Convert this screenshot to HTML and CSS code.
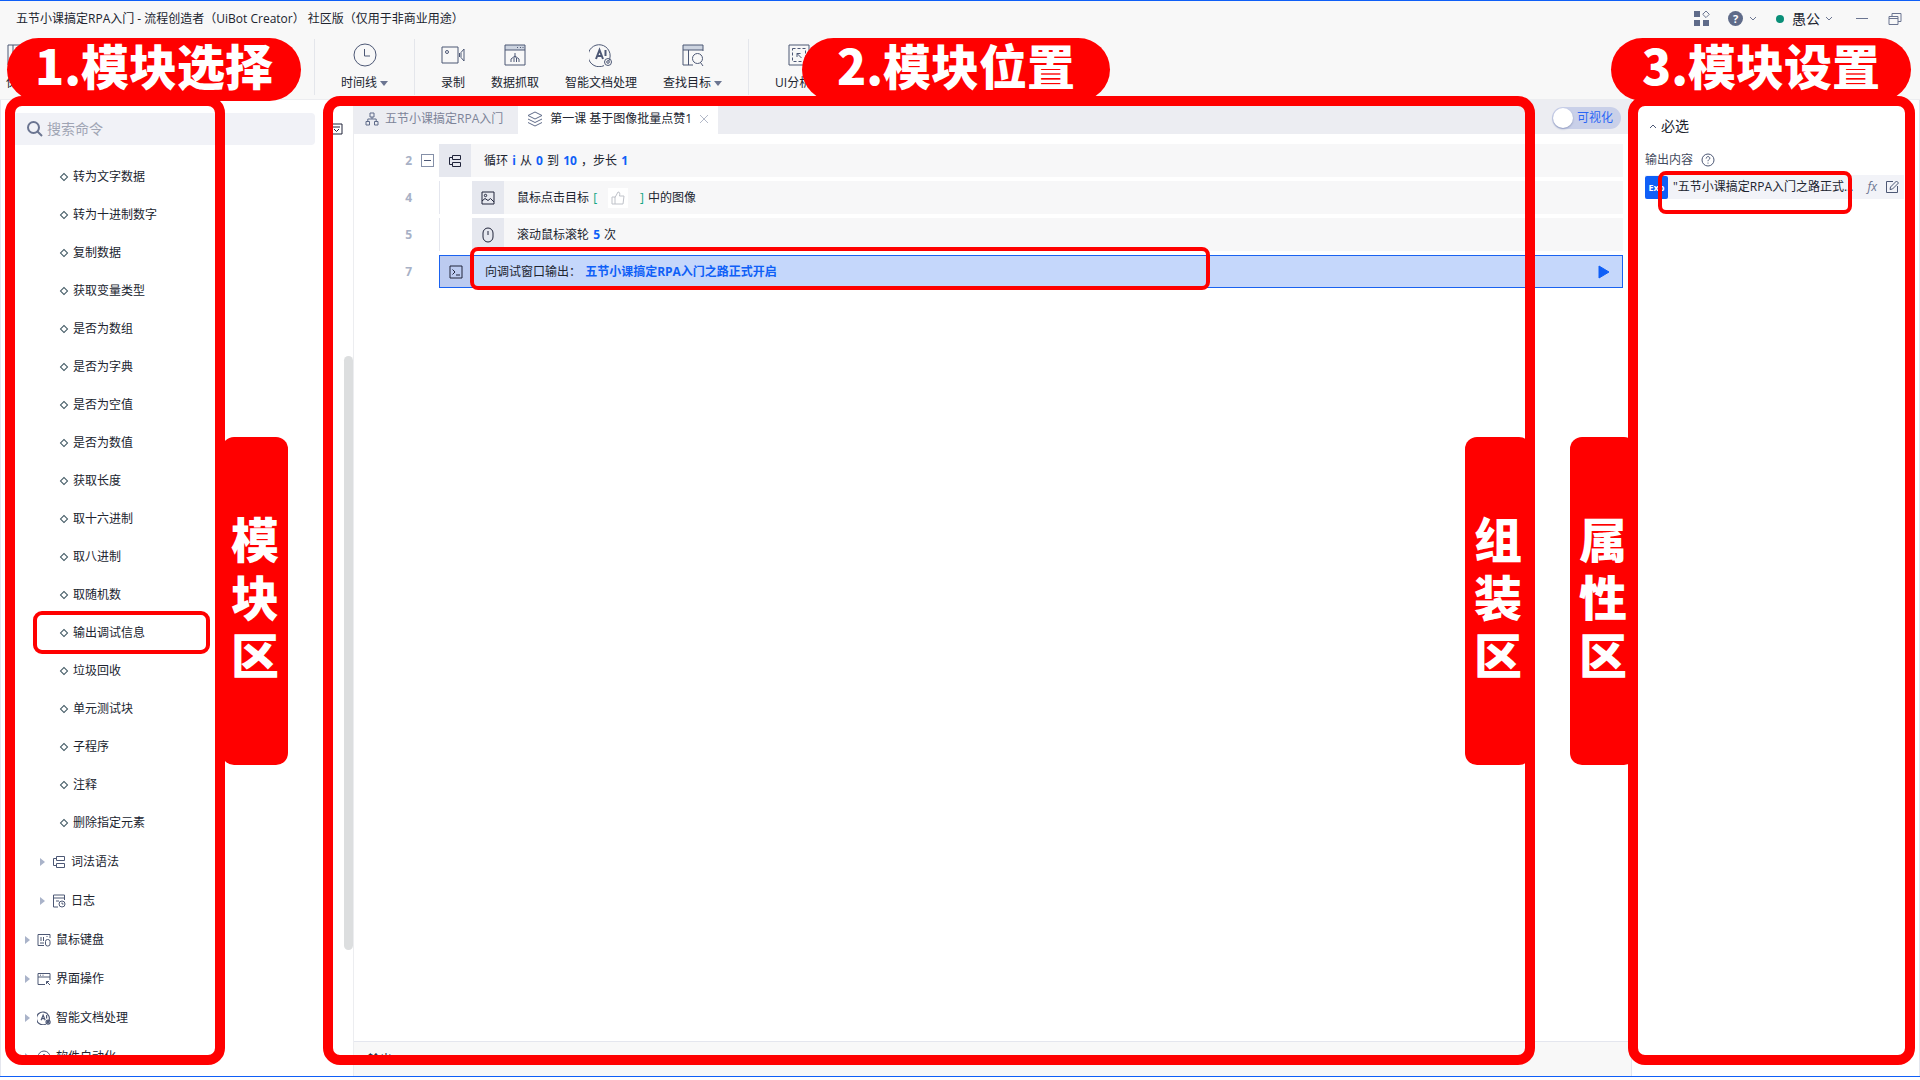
FILE: index.html
```html
<!DOCTYPE html>
<html lang="zh-CN">
<head>
<meta charset="UTF-8">
<meta name="viewport" content="width=device-width, initial-scale=1.0">
<title>五节小课搞定RPA入门 - 流程创造者（UiBot Creator）</title>
<link rel="stylesheet" href="styles.css">
</head>
<body>
<!-- 共用图标 -->
<svg class="defs" width="0" height="0">
  <symbol id="i-flow" viewBox="0 0 14 14"><path d="M4.5 1.5h8v4h-8zM4.5 8.500h8v4h-8zM4.500 3.500h-3v7h3"/></symbol>
  <symbol id="i-ai" viewBox="0 0 24 24"><path d="M19.800 18A11 11 0 1 0 15 22.600"/><path class="bold" d="M7 16l3.500-9 3.500 9M8.200 13h4.600M16.500 7v6"/><circle cx="19" cy="19" r="3.500"/><circle cx="19" cy="19" r="1.300"/></symbol>
  <symbol id="i-down" viewBox="0 0 8 5"><path d="M1 1l3 3 3-3"/></symbol>
</svg>

<header class="titlebar">
  <span class="title">五节小课搞定RPA入门 - 流程创造者（UiBot Creator） 社区版（仅用于非商业用途）</span>
  <div class="window-tools">
    <button class="plain" aria-label="应用"><svg class="apps" width="16" height="16" viewBox="0 0 16 16"><path class="fill" d="M0 0h6v6H0zM0 9h6v6H0zM9 9h6v6H9z"/><path d="M12 0l3.300 3.300L12 6.600 8.700 3.300z"/></svg></button>
    <button class="plain help" aria-label="帮助"><span class="help-dot">?</span><svg width="8" height="5"><use href="#i-down"/></svg></button>
    <button class="plain user"><i class="online"></i>愚公<svg width="8" height="5"><use href="#i-down"/></svg></button>
    <button class="plain" aria-label="最小化"><svg width="12" height="14" viewBox="0 0 12 14"><path d="M0 6.500h12"/></svg></button>
    <button class="plain restore" aria-label="还原"><svg width="14" height="14" viewBox="0 0 14 14"><path d="M1 4.500h9v8H1zM4 4.500v-3h9v8h-3M1 6.500h9"/></svg></button>
  </div>
</header>

<nav class="toolbar">
  <div class="group group-file">
    <button class="tool"><svg width="22" height="24" viewBox="0 0 22 24"><path d="M1 2h20v20H1zM6 2v7h10V2M10 4v3"/></svg><span>保存</span></button>
  </div>
  <div class="group">
    <button class="tool"><svg width="24" height="24" viewBox="0 0 24 24"><circle cx="12" cy="12" r="11"/><path d="M11.500 6v7H17"/></svg><span>时间线<i class="caret"></i></span></button>
  </div>
  <div class="group">
    <button class="tool"><svg width="24" height="24" viewBox="0 0 24 24"><path d="M1 4h16v16H1z"/><circle cx="6" cy="9" r="1.500"/><path d="M18.500 10v4M20 9.500L23 6v12l-3-3.500z"/></svg><span>录制</span></button>
    <button class="tool"><svg width="24" height="24" viewBox="0 0 24 24"><path class="tint" d="M2 2h20v5H2z"/><path d="M2 2h20v20H2zM2 7h20M12 10v5M8 19v-3l4-3 4 3v3M11 15v4M13.500 15v4M14 4.500h1M17 4.500h1M19.500 4.500h1"/></svg><span>数据抓取</span></button>
    <button class="tool"><svg width="24" height="24"><use href="#i-ai"/></svg><span>智能文档处理</span></button>
    <button class="tool"><svg width="24" height="24" viewBox="0 0 24 24"><path class="tint" d="M2 2h20v5H2z"/><path d="M12 22H2V2h20v6M2 7h20M7.500 7v15M19.500 19.500L22 23"/><circle cx="16.500" cy="15.500" r="5"/></svg><span>查找目标<i class="caret"></i></span></button>
  </div>
  <div class="group">
    <button class="tool"><svg width="24" height="24" viewBox="0 0 24 24"><path d="M2 2h20v20H2z"/><path class="dash" d="M5.500 5.500h13v13h-13z"/><path d="M14.500 15L10 10.500M10 14v-3.500h3.500"/></svg><span>UI分析器</span></button>
  </div>
</nav>

<main class="workspace">
  <aside class="commands">
    <div class="search-row">
      <label class="search"><svg width="16" height="16" viewBox="0 0 16 16"><circle cx="6.500" cy="6.500" r="5.500"/><path d="M10.500 10.500l4.500 4.500"/></svg><input type="text" placeholder="搜索命令" aria-label="搜索命令"></label>
      <button class="plain fold" aria-label="折叠"><svg width="14" height="12" viewBox="0 0 14 12"><path d="M1 1h12v10H1zM4 4h7M5 6l2.500 2.500L10 6"/></svg></button>
    </div>
    <ul class="tree">
      <li class="leaf">转为文字数据</li>
      <li class="leaf">转为十进制数字</li>
      <li class="leaf">复制数据</li>
      <li class="leaf">获取变量类型</li>
      <li class="leaf">是否为数组</li>
      <li class="leaf">是否为字典</li>
      <li class="leaf">是否为空值</li>
      <li class="leaf">是否为数值</li>
      <li class="leaf">获取长度</li>
      <li class="leaf">取十六进制</li>
      <li class="leaf">取八进制</li>
      <li class="leaf">取随机数</li>
      <li class="leaf picked">输出调试信息</li>
      <li class="leaf">垃圾回收</li>
      <li class="leaf">单元测试块</li>
      <li class="leaf">子程序</li>
      <li class="leaf">注释</li>
      <li class="leaf">删除指定元素</li>
      <li class="branch sub"><svg width="14" height="14"><use href="#i-flow"/></svg>词法语法</li>
      <li class="branch sub"><svg width="14" height="14" viewBox="0 0 14 14"><path d="M6 13H1.500V1h11v5M1.500 4h11M4 7h3"/><circle cx="10" cy="10" r="3"/><path d="M10 8.500V10h1.500"/></svg>日志</li>
      <li class="branch"><svg width="14" height="14" viewBox="0 0 14 14"><path d="M7 12.500H1v-11h12V5M4 4v4M6.500 4v4M3 10h4M9.500 3.500h1"/><rect x="8.500" y="6.500" width="4.500" height="6.500" rx="2"/></svg>鼠标键盘</li>
      <li class="branch"><svg width="14" height="14" viewBox="0 0 14 14"><path d="M8 12.500H1v-11h12V8M1 5h12M3 3.200h1M5.500 3.200h1M13 13L9.500 9.500M9.500 12V9.500H12"/></svg>界面操作</li>
      <li class="branch"><svg class="ai-small" width="14" height="14"><use href="#i-ai"/></svg>智能文档处理</li>
      <li class="branch"><svg width="14" height="14" viewBox="0 0 14 14"><circle cx="7" cy="7" r="6"/><path d="M5 9l2-5 2 5"/></svg>软件自动化</li>
    </ul>
    <div class="scroll-thumb"></div>
    <div class="frame frame-commands"></div>
    <div class="side-label side-commands">模块区</div>
  </aside>

  <section class="editor">
    <div class="tabs">
      <button class="tab"><svg width="14" height="14" viewBox="0 0 14 14"><path d="M5 1h4v4H5zM1 9.500h3.500V13H1zM9.500 9.500H13V13H9.500zM7 5v2M2.800 9.500V7h8.400v2.500"/></svg>五节小课搞定RPA入门</button>
      <button class="tab active"><svg width="16" height="16" viewBox="0 0 16 16"><path d="M8 1l7 3.500L8 8 1 4.500zM1 8l7 3.500L15 8M1 11.500L8 15l7-3.500"/></svg>第一课 基于图像批量点赞1<svg class="close" width="10" height="10" viewBox="0 0 10 10"><path d="M1 1l8 8M9 1L1 9"/></svg></button>
      <label class="switch"><input type="checkbox"><span>可视化</span></label>
    </div>

    <ol class="steps">
      <li class="step">
        <span class="line-no">2</span><button class="plain minus" aria-label="折叠循环"></button>
        <div class="block"><span class="kind"><svg width="14" height="14"><use href="#i-flow"/></svg></span><p>循环 <b>i</b> 从 <b>0</b> 到 <b>10</b> ，步长 <b>1</b></p></div>
      </li>
      <li class="step nested">
        <span class="line-no">4</span>
        <div class="block"><span class="kind"><svg width="14" height="14" viewBox="0 0 14 14"><path d="M1 1h12v12H1zM1 10l3-2.500 3 2 2.500-2L13 11"/><circle cx="4.500" cy="4.500" r="1.200"/></svg></span><p>鼠标点击目标 <em>[</em><span class="thumb"><svg width="16" height="16" viewBox="0 0 16 16"><path d="M2 7h3v7H2zM5 7.500L8 2c2 0 2 1.500 1.500 4H14l-1 8H5"/></svg></span><em>]</em> 中的图像</p></div>
      </li>
      <li class="step nested">
        <span class="line-no">5</span>
        <div class="block"><span class="kind"><svg width="14" height="16" viewBox="0 0 14 16"><rect x="2" y="1" width="10" height="14" rx="5"/><path d="M7 4v4"/></svg></span><p>滚动鼠标滚轮 <b>5</b> 次</p></div>
      </li>
      <li class="step selected">
        <span class="line-no">7</span>
        <div class="block"><span class="kind"><svg width="14" height="14" viewBox="0 0 14 14"><path d="M1 1h12v12H1zM3.500 4.500L6 7 3.500 9.500M7 10h4"/></svg></span><p>向调试窗口输出： <b>五节小课搞定RPA入门之路正式开启</b></p><button class="plain play" aria-label="运行"><svg width="12" height="14" viewBox="0 0 12 14"><path d="M1 1l10 6-10 6z"/></svg></button><i class="frame frame-step"></i></div>
      </li>
    </ol>

    <footer class="output">输出</footer>
    <div class="side-label side-editor">组装区</div>
  </section>

  <aside class="props">
    <h2><svg width="8" height="5" viewBox="0 0 8 5"><path d="M1 4l3-3 3 3"/></svg>必选</h2>
    <label class="field-label" for="content">输出内容<svg width="14" height="14" viewBox="0 0 14 14"><circle cx="7" cy="7" r="6"/><path d="M5.200 5.500C5.200 3 8.800 3 8.800 5.300 8.800 6.500 7 6.500 7 8.200M7 9.600v1"/></svg></label>
    <div class="field">
      <span class="exp">Exp</span>
      <input id="content" type="text" value='"五节小课搞定RPA入门之路正式开启"'>
      <button class="plain fx">fx</button>
      <button class="plain" aria-label="编辑"><svg width="14" height="14" viewBox="0 0 14 14"><path d="M8 1.500H1.500v11h11V6M5 9.500l.5-2.500L11.500 1l2 2-6 6z"/></svg></button>
      <i class="frame frame-field"></i>
    </div>
    <div class="frame frame-props"></div>
    <div class="side-label side-props">属性区</div>
  </aside>

  <div class="frame frame-editor"></div>
  <div class="pill pill-1">1.模块选择</div>
  <div class="pill pill-2">2.模块位置</div>
  <div class="pill pill-3">3.模块设置</div>
</main>
</body>
</html>
```
FILE: styles.css
```css
*, *::before, *::after {
  box-sizing: border-box;
}
body {
  margin: 0;
  height: 100vh;
  display: flex;
  flex-direction: column;
  border-top: 1px solid #0f5ff7;
  padding-bottom: 3px;
  background: #fff;
  color: #20242f;
  font-family: "Open Sans", "Noto Sans CJK SC", sans-serif;
  font-size: 12px;
  line-height: 18px;
  overflow: hidden;
}
svg {
  flex: none;
  fill: none;
  stroke: #4d5875;
  stroke-width: 1;
}
.defs {
  position: absolute;
}
.bold {
  stroke-width: 2;
}
button, input {
  font: inherit;
  color: inherit;
  border: 0;
  padding: 0;
  background: none;
}
button, .plain {
  display: flex;
  align-items: center;
}
ul, ol {
  list-style: none;
  margin: 0;
  padding: 0;
}
p {
  margin: 0;
}

/* 标题栏 */
.titlebar {
  display: flex;
  align-items: center;
  justify-content: space-between;
  height: 35px;
  padding: 0 18px 0 16px;
  background: #f8f8f8;
}
.window-tools {
  display: flex;
  align-items: center;
  gap: 24px;
}
.window-tools svg {
  stroke: #6b7591;
}
.window-tools .fill {
  fill: #5f6b89;
  stroke: none;
}
.help {
  gap: 6px;
  margin-left: -6px;
}
.help-dot {
  width: 15px;
  height: 15px;
  border-radius: 50%;
  background: #5f6b89;
  color: #fff;
  font-size: 11px;
  font-weight: bold;
  line-height: 15px;
  text-align: center;
}
.user {
  gap: 5px;
  margin-left: -5px;
  font-size: 14px;
}
.online {
  width: 8px;
  height: 8px;
  margin-right: 3px;
  border-radius: 50%;
  background: #0a8f78;
}
.user + .plain {
  margin-left: -1px;
}
.restore {
  margin-left: -4px;
}

/* 工具栏 */
.toolbar {
  display: flex;
  height: 64px;
  padding-top: 3px;
  background: #f8f8f8;
  border-bottom: 1px solid #ecedf0;
}
.group {
  display: flex;
  gap: 26px;
  height: 56px;
  padding: 0 26px;
  border-right: 1px solid #e4e6eb;
}
.group:last-child {
  border-right: 0;
}
.group-file {
  width: 315px;
  padding: 0 6px;
}
.tool {
  flex-direction: column;
  align-items: center;
  justify-content: flex-start;
  padding-top: 4px;
  gap: 7px;
  white-space: nowrap;
}
.tint {
  fill: #cdd4e0;
  stroke: none;
}
.dash {
  stroke-dasharray: 3 2;
}
.caret {
  display: inline-block;
  margin-left: 3px;
  border: 4px solid transparent;
  border-top: 5px solid #6b7591;
  border-bottom: 0;
  vertical-align: 1px;
}

/* 主体 */
.workspace {
  position: relative;
  flex: 1;
  min-height: 0;
  display: flex;
  border-bottom: 1px solid #0f5ff7;
}
.commands {
  position: relative;
  width: 354px;
  display: flex;
  flex-direction: column;
  border-left: 1px solid #e4e6ee;
  border-right: 1px solid #ecedf0;
}
.search-row {
  display: flex;
  align-items: center;
  gap: 14px;
  padding: 13px 0 0 11px;
}
.search {
  display: flex;
  align-items: center;
  gap: 4px;
  width: 303px;
  height: 32px;
  padding-left: 15px;
  border-radius: 4px;
  background: #f1f2f7;
}
.search svg {
  stroke: #6b7591;
  stroke-width: 2;
}
.fold svg {
  stroke: #20243a;
}
.search input {
  flex: 1;
  min-width: 0;
  font-size: 14px;
}
.search input::placeholder {
  color: #a0a5b4;
}
.tree {
  flex: 1;
  min-height: 0;
  margin: 13px 0 13px;
  overflow: hidden;
}
.tree li {
  display: flex;
  align-items: center;
}
.leaf {
  height: 38px;
  padding-left: 60px;
}
.leaf::before {
  content: "";
  width: 6px;
  height: 6px;
  margin-right: 6px;
  border: 1px solid #3d5560;
  transform: rotate(45deg);
}
.branch {
  height: 39px;
  gap: 5px;
  padding-left: 24px;
}
.branch::before {
  content: "";
  margin-right: 2px;
  border: 4px solid transparent;
  border-left: 5px solid #a9b3c9;
  border-right: 0;
}
.sub {
  padding-left: 39px;
}
.ai-small {
  stroke-width: 2;
}
.scroll-thumb {
  position: absolute;
  right: 0;
  top: 256px;
  bottom: 126px;
  width: 9px;
  border-radius: 5px;
  background: #dcdedf;
}

/* 编辑区 */
.editor {
  position: relative;
  flex: 1;
  min-width: 0;
  display: flex;
  flex-direction: column;
  border-right: 1px solid #e4e6ee;
}
.tabs {
  display: flex;
  height: 34px;
  padding-right: 10px;
  background: #ecedf2;
}
.tab {
  gap: 6px;
  padding: 3px 15px 0 11px;
  color: #7c8499;
}
.tab svg {
  stroke: #5f6b89;
}
.tab.active {
  gap: 7px;
  padding: 3px 9px 0;
  background: #fff;
  color: #20242f;
}
.tab .close {
  stroke: #b3b9c8;
}
.switch {
  display: flex;
  align-items: center;
  align-self: center;
  gap: 4px;
  height: 22px;
  margin: 2px 0 0 auto;
  padding-right: 8px;
  border-radius: 11px;
  background: #c9d0e9;
  color: #2a66f5;
}
.switch input {
  appearance: none;
  width: 20px;
  height: 20px;
  margin: 0 0 0 1px;
  border-radius: 50%;
  background: #fff;
  box-shadow: 0 1px 2px #8d98bd;
}
.steps {
  flex: 1;
  display: flex;
  flex-direction: column;
  gap: 4px;
  padding: 10px 8px 0 0;
}
.step {
  display: flex;
  align-items: center;
  height: 33px;
}
.line-no {
  width: 58px;
  color: #a8b1c6;
  font-weight: bold;
  text-align: right;
}
.minus {
  justify-content: center;
  width: 13px;
  height: 13px;
  margin-left: 9px;
  border: 1px solid #8590a8;
}
.minus::before {
  content: "";
  width: 7px;
  height: 1px;
  background: #4d5875;
}
.block {
  position: relative;
  flex: 1;
  display: flex;
  align-items: center;
  height: 33px;
  margin-left: 27px;
  background: #f7f7f8;
}
.minus + .block {
  margin-left: 5px;
}
.nested .block {
  border-left: 1px solid #e4e6ee;
}
.nested .block::before {
  content: "";
  align-self: stretch;
  width: 32px;
  background: #fff;
}
.kind {
  display: flex;
  align-items: center;
  justify-content: center;
  width: 32px;
  height: 33px;
  margin-right: 13px;
  background: #e6e8ef;
}
.kind svg {
  stroke: #20243a;
}
.block p {
  display: flex;
  align-items: center;
  white-space: pre;
}
.block b {
  margin: 0 1px;
  color: #0f5ff7;
}
.block em {
  margin: 0 1px;
  color: #12a582;
  font-style: normal;
}
.thumb {
  display: flex;
  justify-content: center;
  align-items: center;
  width: 20px;
  height: 20px;
  margin: 0 11px 0 10px;
  background: #fff;
}
.thumb svg {
  stroke: #bfc2c9;
}
.selected .block {
  border: 1px solid #1a62f0;
  background: #c5d7fb;
}
.selected .kind {
  height: 31px;
  background: #bccbf0;
}
.play {
  margin: 0 12px 0 auto;
}
.play svg {
  fill: #0f5ff7;
  stroke: #0f5ff7;
}
.output {
  height: 35px;
  padding: 9px 14px;
  border-top: 1px solid #e4e6ee;
  background: #f8f8f8;
}

/* 属性面板 */
.props {
  position: relative;
  width: 288px;
  padding: 14px 15px 0 13px;
  border-right: 1px solid #e4e6ee;
}
.props h2 {
  display: flex;
  align-items: center;
  gap: 4px;
  margin: 0 0 16px 4px;
  font-size: 14px;
  font-weight: normal;
  line-height: 24px;
}
.field-label {
  display: flex;
  align-items: center;
  gap: 8px;
  height: 12px;
  margin-bottom: 9px;
  color: #444b60;
}
.field {
  position: relative;
  display: flex;
  align-items: center;
  gap: 5px;
  height: 24px;
  padding-right: 5px;
  background: #f2f3f8;
}
.exp {
  width: 23px;
  border-radius: 2px;
  background: #0f5ff7;
  color: #fff;
  font-size: 9px;
  font-weight: bold;
  line-height: 23px;
  text-align: center;
}
.field input {
  flex: 1;
  min-width: 0;
  text-overflow: ellipsis;
}
.fx {
  margin: 0 3px 0 0;
  color: #6b7591;
  font-style: italic;
}

/* 红色标注 */
.frame {
  position: absolute;
  border: 10px solid #f00;
  border-radius: 17px;
  pointer-events: none;
}
.frame-commands {
  top: -4px;
  bottom: 11px;
  left: 4px;
  right: 128px;
}
.frame-editor {
  top: -4px;
  bottom: 11px;
  left: 323px;
  right: 385px;
}
.frame-props {
  top: -4px;
  bottom: 11px;
  left: -4px;
  right: 4px;
}
.frame-step, .frame-field {
  border-width: 4px;
  border-radius: 8px;
}
.frame-step {
  top: -9px;
  bottom: -3px;
  left: 30px;
  right: 412px;
}
.frame-field {
  top: -4px;
  bottom: -15px;
  left: 13px;
  right: 52px;
}
.picked {
  position: relative;
}
.picked::after {
  content: "";
  position: absolute;
  top: -3px;
  bottom: -2px;
  left: 32px;
  right: 143px;
  border: 4px solid #f00;
  border-radius: 9px;
}
.pill {
  position: absolute;
  top: -62px;
  height: 63px;
  padding: 0 28px;
  border-radius: 32px;
  background: #f00;
  color: #fff;
  font: 900 48px/52px "Noto Sans CJK SC", sans-serif;
  white-space: nowrap;
}
.pill-1 {
  left: 7px;
}
.pill-2 {
  left: 802px;
  padding: 0 35px;
}
.pill-3 {
  right: 9px;
  padding: 0 31px;
}
.side-label {
  position: absolute;
  top: 337px;
  width: 66px;
  padding: 71px 9px 83px;
  border-radius: 12px;
  background: #f00;
  color: #fff;
  font: 900 48px/58px "Noto Sans CJK SC", sans-serif;
  word-break: break-all;
}
.side-commands {
  right: 65px;
}
.side-editor {
  right: 100px;
}
.side-props {
  left: -62px;
}
```
